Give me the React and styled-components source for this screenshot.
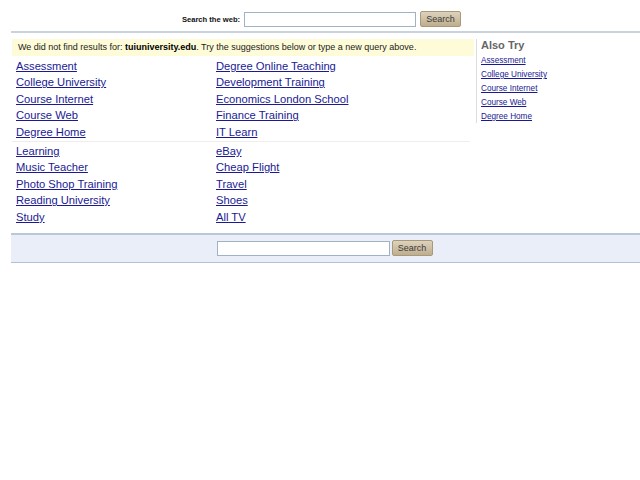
import React from "react";
import styled, { createGlobalStyle } from "styled-components";

const Global = createGlobalStyle`
  html, body { margin: 0; padding: 0; background: #fff; }
  body { font-family: "Liberation Sans", Arial, sans-serif; color: #000; }
`;

const Page = styled.div`
  padding-left: 11px;
  width: 629px;
`;

const Header = styled.div`
  display: flex;
  align-items: center;
  justify-content: center;
  gap: 4px;
  padding-right: 8px;
  padding-top: 7px;
  border-bottom: 2px solid #c9d3dc;
  box-sizing: border-box;
  height: 33px;
`;

const Label = styled.span`
  font-size: 7.6px;
  font-weight: bold;
  color: #111;
`;

const Input = styled.input`
  box-sizing: border-box;
  width: ${(p) => p.$w}px;
  height: 15px;
  border: 1px solid #9fb3c4;
  background: #fff;
  padding: 0;
  margin: 0;
`;

const Button = styled.button`
  box-sizing: border-box;
  width: 41px;
  height: 16px;
  padding: 0;
  margin: 0;
  border: 1px solid #a8997c;
  border-radius: 2px;
  background: linear-gradient(#ddd2bc, #bfae8e);
  color: #3a3a3a;
  font-family: "Liberation Sans", Arial, sans-serif;
  font-size: 9px;
  line-height: 14px;
`;

const Main = styled.div`
  display: flex;
  margin-top: 6px;
`;

const LeftCol = styled.div`
  width: 462px;
  margin-left: 1px;
`;

const Notice = styled.div`
  background: #fefbd8;
  height: 17px;
  line-height: 17px;
  font-size: 9px;
  color: #222;
  padding-left: 6px;
  white-space: nowrap;
  b { color: #000; }
`;

const LinkGrid = styled.div`
  display: grid;
  grid-template-columns: 200px 1fr;
  padding-left: 4px;
  margin-top: ${(p) => p.$mt || 0}px;
`;

const BigLink = styled.a`
  font-size: 11.2px;
  line-height: 16.4px;
  color: #1a1a94;
  text-decoration: underline;
  white-space: nowrap;
  justify-self: start;
`;

const Divider = styled.div`
  height: 1px;
  background: #eeeeee;
  margin: 1px 4px 1px 0;
`;

const RightCol = styled.div`
  margin-left: 2px;
  border-left: 1px solid #dddddd;
  padding-left: 4px;
  height: 84px;
  display: flex;
  flex-direction: column;
  align-items: flex-start;
`;

const AlsoTitle = styled.div`
  font-size: 11px;
  font-weight: bold;
  color: #666;
  line-height: 13px;
  margin-bottom: 2px;
`;

const SmallLink = styled.a`
  font-size: 8.2px;
  line-height: 14px;
  color: #1a1a94;
  text-decoration: underline;
  white-space: nowrap;
`;

const BottomBar = styled.div`
  margin-top: 8px;
  height: 30px;
  box-sizing: border-box;
  background: #e9eef8;
  border-top: 2px solid #b9c8d3;
  border-bottom: 1px solid #b3c2ce;
  display: flex;
  align-items: center;
  justify-content: center;
  gap: 2px;
  padding-right: 2px;
  padding-bottom: 1px;
`;

const left1 = ["Assessment", "College University", "Course Internet", "Course Web", "Degree Home"];
const right1 = ["Degree Online Teaching", "Development Training", "Economics London School", "Finance Training", "IT Learn"];
const left2 = ["Learning", "Music Teacher", "Photo Shop Training", "Reading University", "Study"];
const right2 = ["eBay", "Cheap Flight", "Travel", "Shoes", "All TV"];
const also = ["Assessment", "College University", "Course Internet", "Course Web", "Degree Home"];

function Group({ left, right, mt }) {
  const items = [];
  left.forEach((l, i) => {
    items.push(<BigLink key={"l" + i} href="#">{l}</BigLink>);
    items.push(<BigLink key={"r" + i} href="#">{right[i]}</BigLink>);
  });
  return <LinkGrid $mt={mt}>{items}</LinkGrid>;
}

export default function App() {
  return (
    <>
      <Global />
      <Page>
        <Header>
          <Label>Search the web:</Label>
          <Input $w={172} />
          <Button>Search</Button>
        </Header>
        <Main>
          <LeftCol>
            <Notice>
              We did not find results for: <b>tuiuniversity.edu</b>. Try the suggestions below or type a new query above.
            </Notice>
            <Group left={left1} right={right1} mt={2} />
            <Divider />
            <Group left={left2} right={right2} />
          </LeftCol>
          <RightCol>
            <AlsoTitle>Also Try</AlsoTitle>
            {also.map((a) => (
              <SmallLink key={a} href="#">{a}</SmallLink>
            ))}
          </RightCol>
        </Main>
        <BottomBar>
          <Input $w={173} />
          <Button>Search</Button>
        </BottomBar>
      </Page>
    </>
  );
}
